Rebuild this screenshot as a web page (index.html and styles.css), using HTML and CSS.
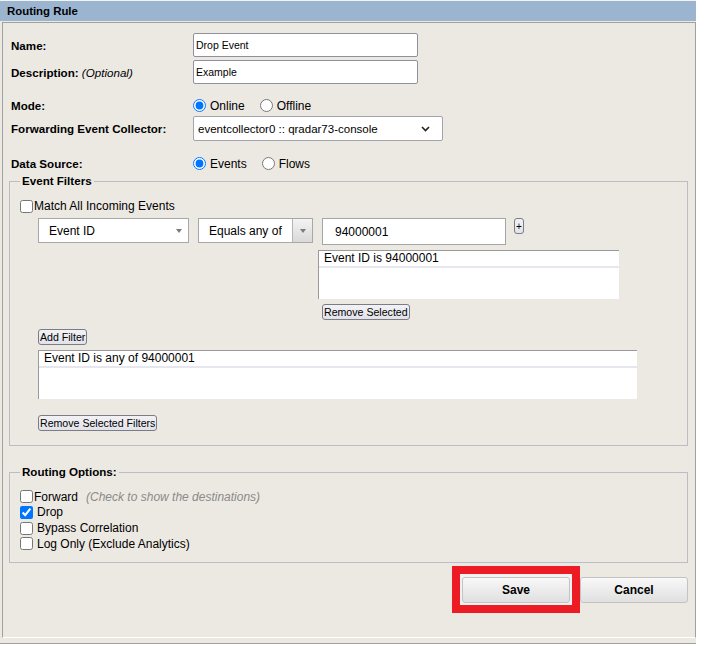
FILE: index.html
```html
<!DOCTYPE html>
<html>
<head>
<meta charset="utf-8">
<title>Routing Rule</title>
<link rel="stylesheet" href="styles.css">
</head>
<body>
<div class="window">
  <div class="title">Routing Rule</div>
  <div class="panel">
    <div class="row row-name">
      <span class="label">Name:</span>
      <input class="text" type="text" value="Drop Event">
    </div>
    <div class="row row-desc">
      <span class="label">Description: <i class="opt-note">(Optional)</i></span>
      <input class="text" type="text" value="Example">
    </div>
    <div class="row row-mode">
      <span class="label">Mode:</span>
      <label class="radio"><input type="radio" name="mode" checked>Online</label>
      <label class="radio"><input type="radio" name="mode">Offline</label>
    </div>
    <div class="row row-fwd">
      <span class="label">Forwarding Event Collector:</span>
      <div class="native-select">
        <span>eventcollector0 :: qradar73-console</span>
        <svg class="chev" width="9" height="6" viewBox="0 0 9 6"><path d="M1 1 L4.5 4.5 L8 1" fill="none" stroke="#222" stroke-width="1.6"/></svg>
      </div>
    </div>
    <div class="row row-src">
      <span class="label">Data Source:</span>
      <label class="radio"><input type="radio" name="src" checked>Events</label>
      <label class="radio"><input type="radio" name="src">Flows</label>
    </div>

    <fieldset class="group filters">
      <legend>Event Filters</legend>
      <label class="opt tight match"><input type="checkbox">Match All Incoming Events</label>
      <div class="filter-row">
        <div class="dd field-dd"><span>Event ID</span><span class="tri"></span></div>
        <div class="dd combo"><span class="combo-text">Equals any of</span><span class="combo-btn"><span class="tri"></span></span></div>
        <input class="num" type="text" value="94000001">
        <button class="mini plus">+</button>
      </div>
      <div class="listbox values">
        <div class="item">Event ID is 94000001</div>
      </div>
      <button class="mini remove-sel">Remove Selected</button>
      <button class="mini add-filter">Add Filter</button>
      <div class="listbox filters-list">
        <div class="item">Event ID is any of 94000001</div>
      </div>
      <button class="mini remove-filters">Remove Selected Filters</button>
    </fieldset>

    <fieldset class="group routing">
      <legend>Routing Options:</legend>
      <label class="opt tight"><input type="checkbox">Forward<i class="hint">(Check to show the destinations)</i></label>
      <label class="opt"><input type="checkbox" checked>Drop</label>
      <label class="opt"><input type="checkbox">Bypass Correlation</label>
      <label class="opt"><input type="checkbox">Log Only (Exclude Analytics)</label>
    </fieldset>

    <div class="actions">
      <div class="highlight"><button class="btn save">Save</button></div>
      <button class="btn cancel">Cancel</button>
    </div>
  </div>
</div>
</body>
</html>
```

FILE: styles.css
```css
html, body {
  margin: 0;
  padding: 0;
  background: #ffffff;
}

body {
  font-family: "Liberation Sans", Arial, sans-serif;
  font-size: 12px;
  color: #000;
}

.window {
  width: 696px;
  height: 644px;
  box-sizing: border-box;
  background: #ece9e3;
  border-top: 1px solid #f3f3f3;
  border-bottom: 1px solid #a0a0a0;
}

.title {
  height: 20px;
  line-height: 20px;
  background: #9bb5d1;
  padding-left: 7px;
  font-weight: bold;
  font-size: 11.4px;
  margin-bottom: 1px;
}

.panel {
  margin-left: 2px;
  width: 694px;
  height: 616px;
  box-sizing: border-box;
  border: 1px solid #a0a0a0;
  border-bottom-color: #ffffff;
  padding: 0 7px 0 0;
}

.row {
  display: flex;
  align-items: center;
  padding-left: 8px;
}

.label {
  width: 182px;
  flex: none;
  font-weight: bold;
  font-size: 11.6px;
  white-space: nowrap;
}

.opt-note {
  font-weight: normal;
  font-size: 11.6px;
}

.row-name { margin-top: 10px; height: 24px; }
.row-desc { margin-top: 3px; height: 24px; }
.row-mode { margin-top: 12px; height: 19px; }
.row-fwd { margin-top: 1px; height: 25px; }
.row-src { margin-top: 13px; height: 19px; }

.text {
  width: 225px;
  height: 24px;
  box-sizing: border-box;
  border: 1px solid #8f8f9d;
  border-radius: 2px;
  padding: 0 2px;
  margin: 0;
  font-family: "Liberation Sans", Arial, sans-serif;
  font-size: 10.5px;
  color: #000;
  background: #fff;
  outline: none;
}

.radio {
  display: flex;
  align-items: center;
  font-size: 12px;
  margin-right: 15px;
}

.radio input {
  width: 13px;
  height: 13px;
  margin: 0 4px 0 0;
}

.native-select {
  width: 250px;
  height: 25px;
  box-sizing: border-box;
  border: 1px solid #a3a3ad;
  border-radius: 2px;
  background: #fff;
  display: flex;
  align-items: center;
  padding: 0 12px 0 4px;
  font-size: 11.5px;
}

.native-select span {
  flex: 1;
  white-space: nowrap;
}

.chev {
  flex: none;
}

/* Fieldsets */
.group {
  margin: 0 0 0 6px;
  border: 1px solid #bcbcc6;
  min-width: 0;
}

.group legend {
  padding: 0 2px;
  font-weight: bold;
  font-size: 11.6px;
  line-height: 16px;
}

.filters {
  padding: 9px 0 14px 10px;
}

.routing {
  margin-top: 18px;
  padding: 9px 0 10px 10px;
}

.opt {
  display: flex;
  align-items: center;
  height: 15.67px;
  font-size: 12px;
  white-space: nowrap;
}

.opt input {
  width: 13px;
  height: 13px;
  margin: 0 4px 0 0;
}

.opt.tight input {
  margin-right: 1px;
}

.match {
  height: 16px;
}

.hint {
  color: #8a8a8a;
  margin-left: 8px;
}

.filter-row {
  display: flex;
  align-items: flex-start;
  margin: 4px 0 0 18px;
  gap: 9px;
}

.dd {
  height: 25px;
  box-sizing: border-box;
  border: 1px solid #a8a8a8;
  background: #fff;
  display: flex;
  align-items: center;
  font-size: 12px;
}

.field-dd {
  width: 151px;
  padding: 0 6px 0 10px;
  justify-content: space-between;
}

.tri {
  width: 0;
  height: 0;
  border-left: 3.5px solid transparent;
  border-right: 3.5px solid transparent;
  border-top: 4px solid #7b7b7b;
}

.combo {
  width: 115px;
}

.combo-text {
  flex: 1;
  padding-left: 10px;
  white-space: nowrap;
}

.combo-btn {
  width: 20px;
  height: 23px;
  box-sizing: border-box;
  border-left: 1px solid #b4b4b4;
  background: linear-gradient(#f3f3f3, #d9d9d9);
  display: flex;
  align-items: center;
  justify-content: center;
}

.num {
  width: 184px;
  height: 27px;
  box-sizing: border-box;
  border: 1px solid #a5a5a5;
  border-radius: 0;
  padding: 0 0 0 12px;
  margin: 0;
  font-family: "Liberation Sans", Arial, sans-serif;
  font-size: 12px;
  color: #000;
  background: #fff;
  outline: none;
}

.mini {
  display: block;
  height: 16px;
  box-sizing: border-box;
  border: 1px solid #7c7c84;
  border-radius: 3px;
  background: linear-gradient(#f2f2f6, #e2e2ea);
  padding: 0 1px;
  margin: 0;
  font-family: "Liberation Sans", Arial, sans-serif;
  font-size: 10.6px;
  line-height: 14px;
  color: #000;
}

.plus {
  width: 10px;
  padding: 0;
  font-size: 10px;
  line-height: 13px;
  margin-left: -1px;
  text-align: center;
}

.listbox {
  height: 49px;
  box-sizing: border-box;
  border-top: 1px solid #9a9a9a;
  border-left: 1px solid #9a9a9a;
  background: #fff;
}

.listbox .item {
  height: 15px;
  line-height: 15px;
  padding-left: 5px;
  border-bottom: 2px solid #e6e6ee;
  font-size: 12px;
  white-space: nowrap;
}

.values {
  width: 301px;
  margin: 5px 0 0 298px;
}

.remove-sel {
  margin: 5px 0 0 302px;
}

.add-filter {
  margin: 9px 0 0 18px;
}

.filters-list {
  width: 599px;
  margin: 5px 0 0 18px;
}

.remove-filters {
  margin: 16px 0 0 18px;
}

/* Buttons */
.actions {
  display: flex;
  justify-content: flex-end;
  align-items: flex-start;
  margin-top: 3px;
}

.highlight {
  border: 8px solid #ed1c24;
  padding: 3px 2px 2px 2px;
  background: #f2f2f2;
  display: flex;
}

.btn {
  width: 108px;
  height: 26px;
  box-sizing: border-box;
  border: 1px solid #c3c3c3;
  border-radius: 3px;
  background: linear-gradient(#f8f8f8, #e0e0e0);
  font-family: "Liberation Sans", Arial, sans-serif;
  font-weight: bold;
  font-size: 12px;
  color: #000;
  margin: 0;
  padding: 0;
}

.cancel {
  margin-top: 11px;
}
```
